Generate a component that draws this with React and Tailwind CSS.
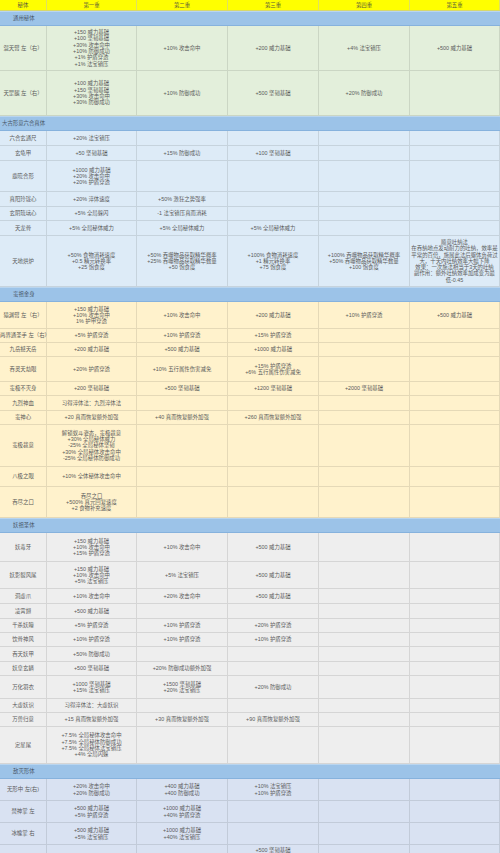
import React from "react";

const S1 = "bg-[#e3efdb]";
const S2 = "bg-[#ddebf7]";
const S3 = "bg-[#fff2cc]";
const S4 = "bg-[#eeeeee]";
const S5 = "bg-[#d9e2f2]";

const sec = (label, pad = "pl-[13px]") => ({ sec: true, label, pad });

const rows = [
  sec("通用秘体"),
  { bg: S1, h: "h-[45px]", label: "混天臂 左（右）", cells: [["+150 威力基础", "+100 坚韧基础", "+30% 攻击命中", "+10% 防御成功", "+1% 护盾穿透", "+1% 法宝镇压"], ["+10% 攻击命中"], ["+200 威力基础"], ["+4% 法宝镇压"], ["+500 威力基础"]] },
  { bg: S1, h: "h-[45px]", label: "天罡腿 左（右）", cells: [["+100 威力基础", "+150 坚韧基础", "+30% 攻击命中", "+30% 防御成功"], ["+10% 防御成功"], ["+500 坚韧基础"], ["+20% 防御成功"], []] },
  sec("大古形意六合真体", "pl-[2px]"),
  { bg: S2, h: "h-[15px]", label: "六合玄通尺", cells: [["+20% 法宝镇压"], [], [], [], []] },
  { bg: S2, h: "h-[15px]", label: "玄龟甲", cells: [["+50 坚韧基础"], ["+15% 防御成功"], ["+100 坚韧基础"], [], []] },
  { bg: S2, h: "h-[31px]", label: "鹿晓合形", cells: [["+1000 威力基础", "+20% 攻击命中", "+20% 护盾穿透"], [], [], [], []] },
  { bg: S2, h: "h-[15px]", label: "真阳玲珑心", cells: [["+20% 淬体速度"], ["+50% 激狂之势强率"], [], [], []] },
  { bg: S2, h: "h-[14px]", label: "玄阴琉璃心", cells: [["+5% 全局躲闪"], ["-1 法宝镇压真而消耗"], [], [], []] },
  { bg: S2, h: "h-[15px]", label: "天龙骨", cells: [["+5% 全局秘体威力"], ["+5% 全局秘体威力"], ["+5% 全局秘体威力"], [], []] },
  { bg: S2, h: "h-[51px]", label: "天地烘炉", cells: [
    ["+50% 食物消耗速度", "+0.5 精元转换率", "+25 饱食度"],
    ["+50% 吞噬物品获取精华概率", "+25% 吞噬物品获取精华数量", "+50 饱食度"],
    ["+100% 食物消耗速度", "+1 精元转换率", "+75 饱食度"],
    ["+100% 吞噬物品获取精华概率", "+50% 吞噬物品获取精华数量", "+100 饱食度"],
    ["顺意吐纳法", "在吞纳地点发动耐力的吐纳，效率是", "平常的百倍，施展此法后躯体负荷过", "大，十天内吐纳效率大幅下降", "效果：一次施法相当于3天的吐纳", "副作用：额外吐纳效率加成变为最", "低-0.45"],
  ] },
  sec("蛮祖金身"),
  { bg: S3, h: "h-[27px]", label: "猿渊臂 左（右）", cells: [["+150 威力基础", "+10% 攻击命中", "1% 护甲穿透"], ["+10% 攻击命中"], ["+200 威力基础"], ["+10% 护盾穿透"], ["+500 威力基础"]] },
  { bg: S3, h: "h-[14px]", label: "两界通圣手 左（右）", cells: [["+5% 护盾穿透"], ["+10% 护盾穿透"], ["+15% 护盾穿透"], [], []] },
  { bg: S3, h: "h-[14px]", label: "九岳撼天岳", cells: [["+200 威力基础"], ["+500 威力基础"], ["+1000 威力基础"], [], []] },
  { bg: S3, h: "h-[25px]", label: "吞灵天劫眼", cells: [["+20% 护盾穿透"], ["+10% 五行属性伤害减免"], ["+15% 护盾穿透", "+6% 五行属性伤害减免"], [], []] },
  { bg: S3, h: "h-[14px]", label: "蛮极不灭身", cells: [["+200 坚韧基础"], ["+500 坚韧基础"], ["+1200 坚韧基础"], ["+2000 坚韧基础"], []] },
  { bg: S3, h: "h-[15px]", label: "九烈神血", cells: [["习得淬体法：九烈淬体法"], [], [], [], []] },
  { bg: S3, h: "h-[14px]", label: "蛮神心", cells: [["+20 真而恢复额外加强"], ["+40 真而恢复额外加强"], ["+260 真而恢复额外加强"], [], []] },
  { bg: S3, h: "h-[42px]", label: "蛮极裁意", cells: [["解锁蚁斗姿态，蛮极裁意", "+30% 全局秘体威力", "-25% 全局秘体坚韧", "+30% 全局秘体攻击命中", "-25% 全局秘体防御成功"], [], [], [], []] },
  { bg: S3, h: "h-[20px]", label: "八极之眼", cells: [["+10% 全体秘体攻击命中"], [], [], [], []] },
  { bg: S3, h: "h-[31px]", label: "吞尽之口", cells: [["吞尽之口", "+500% 真元回复速度", "+2 食物补充速度"], [], [], [], []] },
  sec("妖祖圣体"),
  { bg: S4, h: "h-[29px]", label: "妖毒牙", cells: [["+150 威力基础", "+10% 攻击命中", "+15% 护盾穿透"], ["+10% 攻击命中"], ["+500 威力基础"], [], []] },
  { bg: S4, h: "h-[27px]", label: "妖影裂风尾", cells: [["+150 威力基础", "+10% 攻击命中", "+5% 法宝镇压"], ["+5% 法宝镇压"], ["+500 威力基础"], [], []] },
  { bg: S4, h: "h-[15px]", label: "洞虚爪", cells: [["+10% 攻击命中"], ["+20% 攻击命中"], ["+500 威力基础"], [], []] },
  { bg: S4, h: "h-[15px]", label: "凌霄翅", cells: [["+500 威力基础"], [], [], [], []] },
  { bg: S4, h: "h-[14px]", label: "千杀妖瞳", cells: [["+5% 护盾穿透"], ["+10% 护盾穿透"], ["+20% 护盾穿透"], [], []] },
  { bg: S4, h: "h-[14px]", label: "饮骨神风", cells: [["+10% 护盾穿透"], ["+10% 护盾穿透"], ["+10% 护盾穿透"], [], []] },
  { bg: S4, h: "h-[15px]", label: "吞天妖甲", cells: [["+50% 防御成功"], [], [], [], []] },
  { bg: S4, h: "h-[14px]", label: "妖皇玄鳞", cells: [["+500 坚韧基础"], ["+20% 防御成功额外加强"], [], [], []] },
  { bg: S4, h: "h-[23px]", label: "万化羽衣", cells: [["+1000 坚韧基础", "+15% 法宝镇压"], ["+1500 坚韧基础", "+20% 法宝镇压"], ["+20% 防御成功"], [], []] },
  { bg: S4, h: "h-[14px]", label: "大虚妖识", cells: [["习得淬体法：大虚妖识"], [], [], [], []] },
  { bg: S4, h: "h-[14px]", label: "万兽归意", cells: [["+15 真而恢复额外加强"], ["+30 真而恢复额外加强"], ["+90 真而恢复额外加强"], [], []] },
  { bg: S4, h: "h-[37px]", label: "定星尾", cells: [["+7.5% 全局秘体攻击命中", "+7.5% 全局秘体防御成功", "+7.5% 全局秘体法宝镇压", "+4% 全局闪躲"], [], [], [], []] },
  sec("敌灭形体"),
  { bg: S5, h: "h-[22px]", label: "无形中 左(右)", cells: [["+20% 攻击命中", "+20% 防御成功"], ["+400 威力基础", "+400 防御成功"], ["+10% 法宝镇压", "+10% 护盾穿透"], [], []] },
  { bg: S5, h: "h-[22px]", label: "焚神掌 左", cells: [["+500 威力基础", "+5% 护盾穿透"], ["+1000 威力基础", "+40% 护盾穿透"], [], [], []] },
  { bg: S5, h: "h-[22px]", label: "冰魄掌 右", cells: [["+500 威力基础", "+5% 法宝镇压"], ["+1000 威力基础", "+40% 法宝镇压"], [], [], []] },
  { bg: S5, h: "h-[22px]", label: "", cells: [[], [], ["+500 坚韧基础"], [], []], top: true },
];

const GRID = "grid grid-cols-[47px_90px_91px_91px_91px_90px]";

function Lines({ lines, top }) {
  return (
    <div className={`flex flex-col h-full ${top ? "justify-start pt-[2px]" : "justify-center"}`}>
      {lines.map((l, i) => (
        <div key={i} className="text-center whitespace-nowrap">{l}</div>
      ))}
    </div>
  );
}

export default function App() {
  return (
    <div
      className="w-[500px] h-[853px] overflow-hidden bg-white text-[#5a5a5a] text-[5.4px] leading-[6.3px]"
      style={{ fontFamily: '"Liberation Sans", "Noto Sans CJK SC", sans-serif' }}
    >
      <div className={`${GRID} h-[11px] bg-[#ffff00] border-b border-[#d8d86a]`}>
        {["秘体", "第一重", "第二重", "第三重", "第四重", "第五重"].map((t) => (
          <div key={t} className="flex items-center justify-center border-r border-[#e0e060] text-[#5a5a3a]">
            {t}
          </div>
        ))}
      </div>
      {rows.map((r, i) =>
        r.sec ? (
          <div
            key={i}
            className={`h-[15px] flex items-center ${r.pad} bg-[#9cc3e8] border-t border-[#b9d5ef] border-b border-b-[#86b2dd] text-[#4a5868]`}
          >
            {r.label}
          </div>
        ) : (
          <div key={i} className={`${GRID} ${r.h} ${r.bg}`}>
            <div className="border-r border-b border-black/10">
              <Lines lines={r.label ? [r.label] : []} />
            </div>
            {r.cells.map((c, j) => (
              <div key={j} className="border-r border-b border-black/10">
                <Lines lines={c} top={r.top} />
              </div>
            ))}
          </div>
        )
      )}
    </div>
  );
}
